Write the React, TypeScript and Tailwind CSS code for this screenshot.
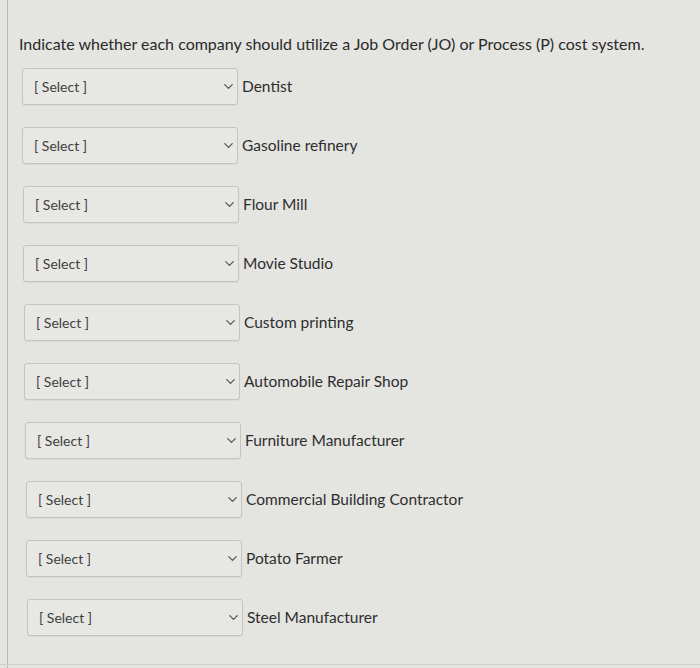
import { ChevronDown } from "lucide-react";

const items = [
  { label: "Dentist", shift: "ml-0" },
  { label: "Gasoline refinery", shift: "ml-0" },
  { label: "Flour Mill", shift: "ml-px" },
  { label: "Movie Studio", shift: "ml-px" },
  { label: "Custom printing", shift: "ml-[2px]" },
  { label: "Automobile Repair Shop", shift: "ml-[2px]" },
  { label: "Furniture Manufacturer", shift: "ml-[3px]" },
  { label: "Commercial Building Contractor", shift: "ml-[4px]" },
  { label: "Potato Farmer", shift: "ml-[4px]" },
  { label: "Steel Manufacturer", shift: "ml-[5px]" },
];

function SelectRow({ label, shift }: { label: string; shift: string }) {
  return (
    <div className={`flex items-center ${shift}`}>
      <div className="relative flex h-[37px] w-[216px] items-center rounded-[3px] border border-[#c4c4c1] bg-[#e7e7e4] pl-[11px] text-[14px] text-[#404040] shadow-[0_1px_1px_rgba(0,0,0,0.05)]">
        [ Select ]
        <ChevronDown className="absolute right-[1px] top-[10px] h-[15px] w-[15px] text-[#555]" strokeWidth={2} />
      </div>
      <span className="ml-[4px] text-[15.5px] text-[#2e2e2e]">{label}</span>
    </div>
  );
}

export default function App() {
  return (
    <div
      className="relative h-[668px] w-[700px] overflow-hidden bg-[#e4e4e1]"
      style={{ fontFamily: "Lato, 'Open Sans', sans-serif" }}
    >
      <div className="absolute left-[7px] top-0 h-full w-px bg-[#b9b9b6]" />
      <div className="absolute bottom-[3px] left-0 h-px w-full bg-[#cfcfcc]" />
      <div className="pl-[19px] pt-[33px] text-[16px] leading-[22px] text-[#2a2a2a]">
        Indicate whether each company should utilize a Job Order (JO) or Process (P) cost system.
      </div>
      <div className="mt-[13px] flex flex-col gap-[22px] pl-[22px]">
        {items.map((it) => (
          <SelectRow key={it.label} label={it.label} shift={it.shift} />
        ))}
      </div>
    </div>
  );
}
